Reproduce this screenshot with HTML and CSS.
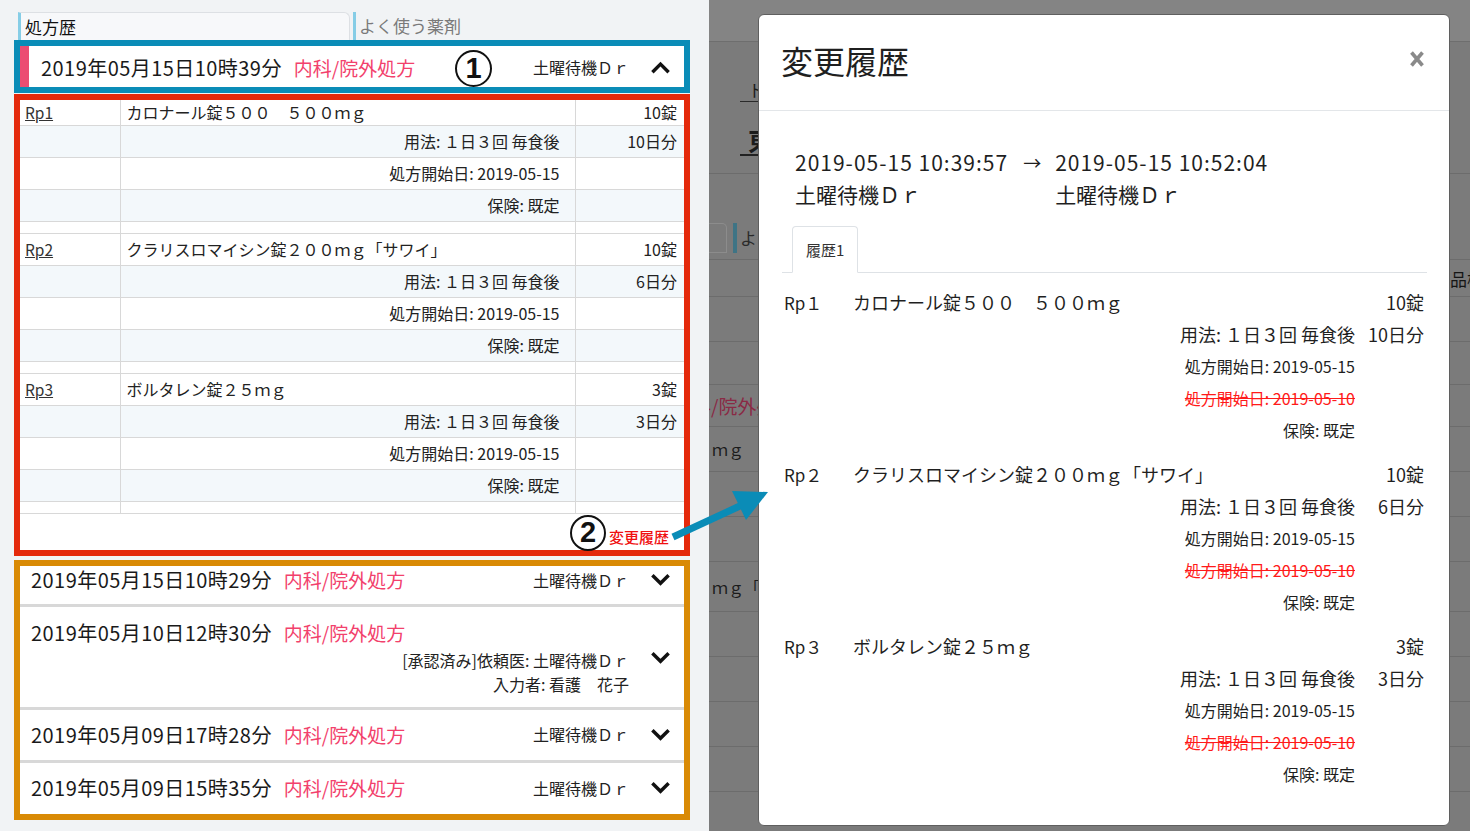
FILE: index.html
```html
<!DOCTYPE html>
<html lang="ja">
<head>
<meta charset="utf-8">
<title>処方歴 - 変更履歴</title>
<link rel="stylesheet" href="styles.css">
</head>
<body>
<div class="screen">
  <section class="left">
    <div class="tabs">
      <div class="tab tab-active">処方歴</div>
      <div class="tab tab-other">よく使う薬剤</div>
    </div>

    <div class="box box-blue">
      <div class="rx-head rx-open">
        <span class="rx-date">2019年05月15日10時39分</span>
        <span class="rx-dept">内科/院外処方</span>
        <span class="rx-doc">土曜待機Ｄｒ</span>
        <svg class="chev" viewBox="0 0 22 15"><polyline points="2.5,12.5 11,4 19.5,12.5" fill="none" stroke="#111" stroke-width="3.6"/></svg>
      </div>
      <span class="circ circ-1">1</span>
    </div>

    <div class="box box-red">
      <table class="rx-table">
        <colgroup><col class="col-rp"><col class="col-main"><col class="col-qty"></colgroup>
        <tbody>
          <tr class="r r-first"><td class="c-rp"><a class="rp-link" href="#">Rp1</a></td><td class="c-main">カロナール錠５００　５００ｍｇ</td><td class="c-qty">10錠</td></tr>
          <tr class="r r-alt"><td></td><td class="c-main c-right">用法: １日３回 毎食後</td><td class="c-qty">10日分</td></tr>
          <tr class="r"><td></td><td class="c-main c-right">処方開始日: 2019-05-15</td><td></td></tr>
          <tr class="r r-alt"><td></td><td class="c-main c-right">保険: 既定</td><td></td></tr>
          <tr class="r-gap"><td></td><td></td><td></td></tr>

          <tr class="r"><td class="c-rp"><a class="rp-link" href="#">Rp2</a></td><td class="c-main">クラリスロマイシン錠２００ｍｇ「サワイ」</td><td class="c-qty">10錠</td></tr>
          <tr class="r r-alt"><td></td><td class="c-main c-right">用法: １日３回 毎食後</td><td class="c-qty">6日分</td></tr>
          <tr class="r"><td></td><td class="c-main c-right">処方開始日: 2019-05-15</td><td></td></tr>
          <tr class="r r-alt"><td></td><td class="c-main c-right">保険: 既定</td><td></td></tr>
          <tr class="r-gap"><td></td><td></td><td></td></tr>

          <tr class="r"><td class="c-rp"><a class="rp-link" href="#">Rp3</a></td><td class="c-main">ボルタレン錠２５ｍｇ</td><td class="c-qty">3錠</td></tr>
          <tr class="r r-alt"><td></td><td class="c-main c-right">用法: １日３回 毎食後</td><td class="c-qty">3日分</td></tr>
          <tr class="r"><td></td><td class="c-main c-right">処方開始日: 2019-05-15</td><td></td></tr>
          <tr class="r r-alt"><td></td><td class="c-main c-right">保険: 既定</td><td></td></tr>
          <tr class="r-gap"><td></td><td></td><td></td></tr>
        </tbody>
      </table>
      <div class="rx-foot">
        <span class="circ circ-2">2</span>
        <a class="hist-link" href="#">変更履歴</a>
      </div>
    </div>

    <div class="box box-orange">
      <div class="olist">
        <div class="orow orow-1">
          <span class="rx-date">2019年05月15日10時29分</span>
          <span class="rx-dept">内科/院外処方</span>
          <span class="rx-doc">土曜待機Ｄｒ</span>
          <svg class="chev" viewBox="0 0 22 15"><polyline points="2.5,3 11,11.5 19.5,3" fill="none" stroke="#111" stroke-width="3.6"/></svg>
        </div>
        <div class="orow orow-2">
          <div class="orow-main">
            <div class="orow-line"><span class="rx-date">2019年05月10日12時30分</span><span class="rx-dept">内科/院外処方</span></div>
            <div class="orow-meta">[承認済み]依頼医: 土曜待機Ｄｒ</div>
            <div class="orow-meta">入力者: 看護　花子</div>
          </div>
          <svg class="chev" viewBox="0 0 22 15"><polyline points="2.5,3 11,11.5 19.5,3" fill="none" stroke="#111" stroke-width="3.6"/></svg>
        </div>
        <div class="orow orow-3">
          <span class="rx-date">2019年05月09日17時28分</span>
          <span class="rx-dept">内科/院外処方</span>
          <span class="rx-doc">土曜待機Ｄｒ</span>
          <svg class="chev" viewBox="0 0 22 15"><polyline points="2.5,3 11,11.5 19.5,3" fill="none" stroke="#111" stroke-width="3.6"/></svg>
        </div>
        <div class="orow orow-4">
          <span class="rx-date">2019年05月09日15時35分</span>
          <span class="rx-dept">内科/院外処方</span>
          <span class="rx-doc">土曜待機Ｄｒ</span>
          <svg class="chev" viewBox="0 0 22 15"><polyline points="2.5,3 11,11.5 19.5,3" fill="none" stroke="#111" stroke-width="3.6"/></svg>
        </div>
      </div>
    </div>
  </section>

  <section class="right">
    <div class="bg-page">
      <div class="bg-top"></div>
      <div class="bg-crumb"><span class="bg-crumb-text">トップ</span></div>
      <div class="bg-name"><span class="bg-name-text">東京　太郎</span></div>
      <div class="bg-sep"></div>
      <div class="bg-band">
        <span class="bg-tab"></span><span class="bg-tabbar"></span><span class="bg-tab2">よく使う薬剤</span>
      </div>
      <div class="bg-row bg-h37"><span class="bg-fill"></span><span class="bg-search">薬品検索</span></div>
      <div class="bg-row bg-h45"></div>
      <div class="bg-row bg-h43"></div>
      <div class="bg-row bg-h42"><span class="bg-dept">内科/院外処方</span></div>
      <div class="bg-row bg-h45"><span class="bg-drug">５００ｍｇ</span></div>
      <div class="bg-row bg-h45"></div>
      <div class="bg-row bg-h45"></div>
      <div class="bg-row bg-h50"><span class="bg-drug2">００ｍｇ「サワイ」</span></div>
      <div class="bg-row bg-h45"></div>
      <div class="bg-row bg-h45"></div>
      <div class="bg-row bg-h45"></div>
      <div class="bg-row bg-h45"></div>
    </div>

    <div class="modal">
      <div class="modal-head">
        <h2 class="modal-title">変更履歴</h2>
        <svg class="modal-close" viewBox="0 0 16 18"><path d="M2.5 2.5 L13.5 15.5 M13.5 2.5 L2.5 15.5" stroke="#8a8a8a" stroke-width="3.6" fill="none"/></svg>
      </div>
      <div class="modal-body">
        <div class="chg">
          <div class="chg-col">
            <div class="chg-time">2019-05-15 10:39:57</div>
            <div>土曜待機Ｄｒ</div>
          </div>
          <div class="chg-arrow">→</div>
          <div class="chg-col">
            <div class="chg-time">2019-05-15 10:52:04</div>
            <div>土曜待機Ｄｒ</div>
          </div>
        </div>

        <div class="mtabs"><div class="mtab">履歴1</div></div>

        <div class="mitems">
          <div class="mitem">
            <div class="mline"><span class="m-rp">Rp１</span><span class="m-name">カロナール錠５００　５００ｍｇ</span><span class="m-qty">10錠</span></div>
            <div class="mline"><span class="m-sub">用法: １日３回 毎食後</span><span class="m-qty">10日分</span></div>
            <div class="mline"><span class="m-sub m-sm">処方開始日: 2019-05-15</span><span class="m-qty"></span></div>
            <div class="mline"><span class="m-sub m-sm m-del">処方開始日: 2019-05-10</span><span class="m-qty"></span></div>
            <div class="mline"><span class="m-sub m-sm">保険: 既定</span><span class="m-qty"></span></div>
          </div>
          <div class="mitem">
            <div class="mline"><span class="m-rp">Rp２</span><span class="m-name">クラリスロマイシン錠２００ｍｇ「サワイ」</span><span class="m-qty">10錠</span></div>
            <div class="mline"><span class="m-sub">用法: １日３回 毎食後</span><span class="m-qty">6日分</span></div>
            <div class="mline"><span class="m-sub m-sm">処方開始日: 2019-05-15</span><span class="m-qty"></span></div>
            <div class="mline"><span class="m-sub m-sm m-del">処方開始日: 2019-05-10</span><span class="m-qty"></span></div>
            <div class="mline"><span class="m-sub m-sm">保険: 既定</span><span class="m-qty"></span></div>
          </div>
          <div class="mitem">
            <div class="mline"><span class="m-rp">Rp３</span><span class="m-name">ボルタレン錠２５ｍｇ</span><span class="m-qty">3錠</span></div>
            <div class="mline"><span class="m-sub">用法: １日３回 毎食後</span><span class="m-qty">3日分</span></div>
            <div class="mline"><span class="m-sub m-sm">処方開始日: 2019-05-15</span><span class="m-qty"></span></div>
            <div class="mline"><span class="m-sub m-sm m-del">処方開始日: 2019-05-10</span><span class="m-qty"></span></div>
            <div class="mline"><span class="m-sub m-sm">保険: 既定</span><span class="m-qty"></span></div>
          </div>
        </div>
      </div>
    </div>
  </section>

  <svg class="arrow" viewBox="0 0 120 70">
    <line x1="13" y1="57" x2="82" y2="25" stroke="#0a8cb7" stroke-width="7"/>
    <polygon points="108,12 72,11 86,40" fill="#0a8cb7"/>
  </svg>
</div>
</body>
</html>
```

FILE: styles.css
```css
* { box-sizing: border-box; margin: 0; padding: 0; }
html, body { width: 1470px; height: 831px; overflow: hidden; }
body {
  font-family: "Noto Sans CJK JP", "Noto Sans", sans-serif;
  color: #222;
  background: #7b7b7b;
}
a { color: inherit; }

.screen { position: relative; display: flex; width: 1470px; height: 831px; }

/* ---------- left panel ---------- */
.left { flex: 0 0 709px; background: #f1f3f5; padding-top: 12px; }

.tabs { display: flex; height: 28px; margin-left: 18px; }
.tab {
  font-size: 17px; line-height: 27px; white-space: nowrap;
  border-left: 3px solid #86cde6; padding-left: 4px;
}
.tab-active {
  width: 332px; color: #111; background: #f7f8fa;
  border-top: 1px solid #dde0e4; border-right: 1px solid #dde0e4;
  border-radius: 0 6px 0 0;
}
.tab-other { margin-left: 3px; padding-left: 3px; color: #7a7a7a; }

.box { position: relative; width: 676px; margin-left: 14px; border: 6px solid; }
.box-blue { height: 53px; border-color: #0a8cb7; }
.box-red { margin-top: 1px; height: 462px; border-color: #e4290b; background: #fff; }
.box-orange { margin-top: 4px; height: 260px; border-color: #d98a05; }

.rx-head {
  display: flex; align-items: center; height: 100%;
  background: #fff; border-left: 9px solid #ec4d72;
  padding: 1px 13px 0 12px;
}
.rx-date { font-size: 20px; letter-spacing: 0.45px; color: #1a1a1a; white-space: nowrap; }
.rx-dept { font-size: 19px; color: #f2416c; margin-left: 12px; white-space: nowrap; }
.rx-doc { margin-left: auto; font-size: 16px; white-space: nowrap; }
.chev { flex: none; width: 21px; height: 15px; margin-left: 21px; }

.circ {
  display: flex; align-items: center; justify-content: center;
  width: 37px; height: 37px; border: 2.5px solid #111; border-radius: 50%;
  background: #fff; color: #111;
  font-family: "Liberation Sans", "Noto Sans", sans-serif;
  font-size: 29px; font-weight: 700; line-height: 1;
}
.circ-1 { position: absolute; left: 435px; top: 4px; }

/* table */
.rx-table { width: 100%; border-collapse: collapse; table-layout: fixed; font-size: 16px; }
.col-rp { width: 100px; }
.col-main { width: 455px; }
.col-qty { width: 109px; }
.rx-table td { border: 1px solid #d8d8d8; padding: 0; white-space: nowrap; overflow: hidden; }
.rx-table tr:first-child td { border-top: none; }
.rx-table td:first-child { border-left: none; }
.rx-table td:last-child { border-right: none; }
.r { height: 32px; }
.r-first { height: 25px; }
.r-gap { height: 12px; }
.r-alt td { background: #f3f8fb; }
.c-rp { padding-left: 5px !important; font-size: 15.5px; }
.rp-link { color: #333; text-decoration: underline; }
.c-main { padding: 0 15px 0 6px !important; }
.c-right { text-align: right; }
.c-qty { text-align: right; padding-right: 7px !important; }

.rx-foot {
  display: flex; align-items: center; justify-content: flex-end;
  height: 38px; padding-right: 15px;
}
.circ-2 { width: 36px; height: 36px; margin-right: 3px; margin-top: 0; }
.hist-link { color: #f01010; font-size: 15px; font-weight: 500; text-decoration: none; margin-top: 8px; }

/* orange list */
.olist { display: flex; flex-direction: column; gap: 3px; height: 100%; background: #d8d8d8; }
.orow { display: flex; align-items: center; background: #fff; padding: 0 13px 0 11px; }
.orow-1 { height: 38px; padding-bottom: 11px; }
.orow-2 { height: 100px; }
.orow-3 { height: 50px; padding-bottom: 2px; }
.orow-4 { flex: 1; padding-bottom: 2px; }
.orow-main { flex: 1; }
.orow-line { display: flex; align-items: center; height: 28px; }
.orow-meta { font-size: 16px; line-height: 24px; text-align: right; }
.orow-line + .orow-meta { margin-top: 2px; }

/* ---------- right panel ---------- */
.right { position: relative; flex: 1; overflow: hidden; background: #7b7b7b; }

.bg-page { display: flex; flex-direction: column; color: #1b1b1b; }
.bg-top { height: 42px; background: #848484; border-bottom: 1px solid #6e6e6e; }
.bg-crumb { margin-top: 36px; padding-left: 31px; height: 24px; }
.bg-crumb-text { display: inline-block; font-size: 17px; line-height: 22px; padding-left: 8px; border-bottom: 1px solid #2a2a2a; }
.bg-name { margin-top: 24px; padding-left: 31px; height: 32px; }
.bg-name-text { display: inline-block; font-size: 26px; font-weight: 700; line-height: 28px; padding-left: 8px; border-bottom: 2px solid #222; }
.bg-sep { margin-top: 15px; border-top: 1px solid #6c6c6c; }
.bg-band { display: flex; align-items: flex-start; margin-top: 49px; height: 37px; border-bottom: 1px solid #6c6c6c; }
.bg-tab { width: 18px; height: 30px; border: 1px solid #8c8c8c; border-left: none; border-radius: 0 5px 0 0; }
.bg-tabbar { width: 4px; height: 30px; margin-left: 6px; background: #3f7485; }
.bg-tab2 { margin-left: 3px; font-size: 17px; line-height: 30px; color: #2a2a2a; white-space: nowrap; }
.bg-row { display: flex; align-items: center; border-bottom: 1px solid #6c6c6c; white-space: nowrap; }
.bg-h37 { height: 37px; }
.bg-h42 { height: 42px; }
.bg-h43 { height: 43px; }
.bg-h45 { height: 45px; }
.bg-h50 { height: 50px; }
.bg-fill { flex: 1; }
.bg-search { font-size: 17px; margin-right: -31px; color: #151515; width: 68px; }
.bg-dept { font-size: 19px; color: #8a2a45; margin-left: -36px; }
.bg-drug { font-size: 16px; color: #1b1b1b; margin-left: -45px; }
.bg-drug2 { font-size: 16px; color: #1b1b1b; margin-left: -29px; }

.modal {
  position: absolute; left: 49px; top: 14px; width: 692px; height: 812px;
  background: #fff; border: 1px solid #5f5f5f; border-radius: 6px; overflow: hidden;
}
.modal-head {
  display: flex; align-items: center; justify-content: space-between;
  height: 96px; padding: 0 24px 6px 22px; border-bottom: 1px solid #e3e6e9;
}
.modal-title { font-size: 32px; font-weight: 400; line-height: 1; color: #1f1f1f; }
.modal-close { width: 16px; height: 18px; margin-top: -2px; }

.modal-body { padding: 35px 22px 0 23px; }
.chg { display: flex; padding-left: 13px; font-size: 21px; line-height: 32px; color: #1f1f1f; }
.chg-col { white-space: nowrap; }
.chg-time { letter-spacing: 1px; }
.chg-arrow { font-size: 18px; line-height: 32px; margin: 0 14px 0 15px; }

.mtabs { display: flex; margin-top: 16px; padding-left: 10px; border-bottom: 1px solid #dee2e6; }
.mtab {
  height: 47px; padding: 0 13px; font-size: 15px; line-height: 45px; color: #333;
  border: 1px solid #dee2e6; border-bottom-color: #fff; border-radius: 4px 4px 0 0;
  margin-bottom: -1px; background: #fff;
}

.mitems { padding: 13px 3px 0 2px; }
.mitem { margin-bottom: 12px; }
.mline { display: flex; align-items: center; height: 32px; color: #1f1f1f; white-space: nowrap; }
.m-rp { width: 69px; font-size: 17px; }
.m-name { flex: 1; font-size: 18px; }
.m-qty { width: 69px; text-align: right; font-size: 18px; }
.m-sub { flex: 1; text-align: right; font-size: 18px; }
.m-sm { font-size: 16px; }
.m-del { color: #ff1a1a; text-decoration: line-through; }

.arrow { position: absolute; left: 660px; top: 480px; width: 120px; height: 70px; }
```
